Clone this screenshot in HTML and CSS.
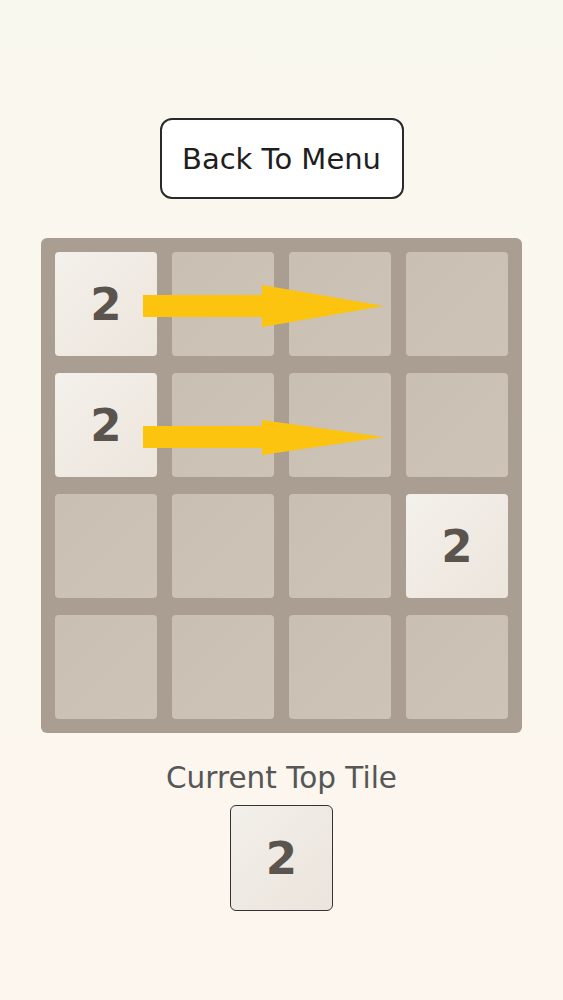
FILE: index.html
```html
<!DOCTYPE html>
<html lang="en">
<head>
    <meta charset="UTF-8">
    <meta name="viewport" content="width=device-width, initial-scale=1.0">
    <title>2048</title>
    <link rel="stylesheet" href="styles.css">
</head>
<body>
    <div class="page">
        <button class="menu-btn" type="button">Back To Menu</button>

        <div class="board">
            <div class="tile filled">2</div>
            <div class="tile"></div>
            <div class="tile"></div>
            <div class="tile"></div>

            <div class="tile filled">2</div>
            <div class="tile"></div>
            <div class="tile"></div>
            <div class="tile"></div>

            <div class="tile"></div>
            <div class="tile"></div>
            <div class="tile"></div>
            <div class="tile filled">2</div>

            <div class="tile"></div>
            <div class="tile"></div>
            <div class="tile"></div>
            <div class="tile"></div>

            <!-- swipe hint arrows -->
            <svg class="hint" viewBox="0 0 481 495" xmlns="http://www.w3.org/2000/svg">
                <polygon points="102,57 221,57 221,47 343,68 221,89 221,79 102,79" />
                <polygon points="102,188 221,188 221,182 343,199 221,217 221,210 102,210" />
            </svg>
        </div>

        <div class="top-label">Current Top Tile</div>
        <div class="top-tile">2</div>
    </div>
</body>
</html>
```

FILE: styles.css
```css
html, body {
    margin: 0;
    padding: 0;
}
body {
    font-family: "DejaVu Sans", Verdana, sans-serif;
    background: linear-gradient(to bottom, #f9f8ee, #fdf6ee);
    min-height: 1000px;
}
.page {
    display: flex;
    flex-direction: column;
    align-items: center;
    padding-top: 118px;
}
.menu-btn {
    width: 244px;
    height: 81px;
    background: #fff;
    border: 2px solid #2a2a2a;
    border-radius: 12px;
    font-family: "DejaVu Sans", Verdana, sans-serif;
    font-size: 29px;
    color: #1e1e1e;
    padding: 0;
}
.board {
    position: relative;
    margin-top: 39px;
    display: grid;
    grid-template-columns: repeat(4, 102px);
    grid-template-rows: repeat(4, 104px);
    column-gap: 15px;
    row-gap: 17px;
    padding: 14px;
    background: #aa9e92;
    border-radius: 6px;
}
.tile {
    background: linear-gradient(135deg, #c9bfb3, #cdc3b7);
    border-radius: 4px;
    display: flex;
    align-items: center;
    justify-content: center;
    font-weight: bold;
    font-size: 45px;
    color: #5b544e;
}
.tile.filled {
    background: linear-gradient(135deg, #f4f0eb, #ece5dc);
}
.hint {
    position: absolute;
    left: 0;
    top: 0;
    width: 100%;
    height: 100%;
}
.hint polygon {
    fill: #fcc30f;
}
.top-label {
    margin-top: 28px;
    font-size: 29.5px;
    color: #565656;
}
.top-tile {
    margin-top: 10px;
    width: 101px;
    height: 104px;
    border: 1.5px solid #333;
    border-radius: 6px;
    background: linear-gradient(135deg, #f3efea, #ebe4dc);
    display: flex;
    align-items: center;
    justify-content: center;
    font-weight: bold;
    font-size: 45px;
    color: #5b544e;
}
```
